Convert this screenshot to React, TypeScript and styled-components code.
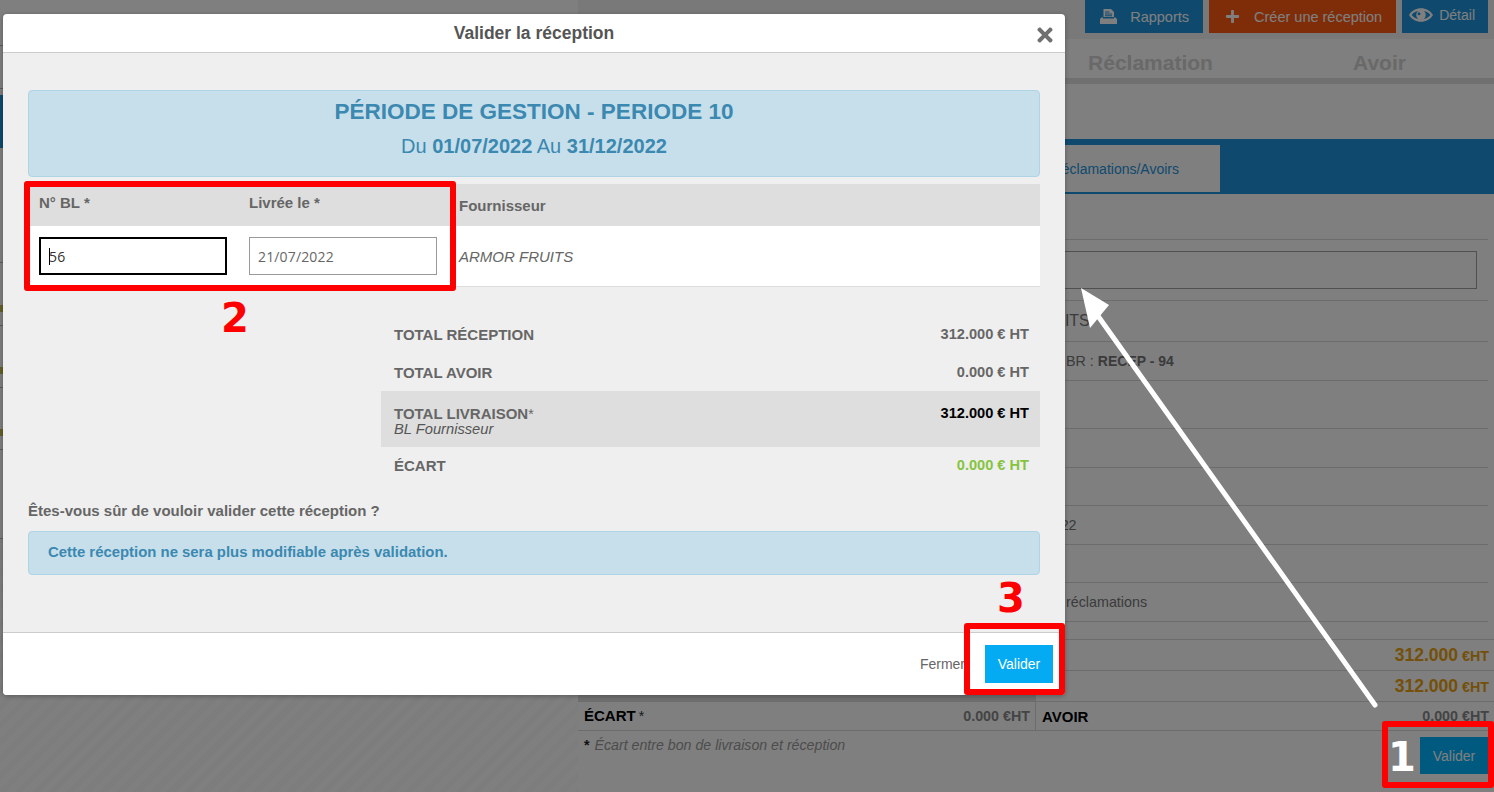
import React from 'react';
import styled, { createGlobalStyle } from 'styled-components';
import { FaPlus, FaTimes } from 'react-icons/fa';

const Global = createGlobalStyle`
  html, body { margin: 0; padding: 0; background: #fefefe; }
  body { font-family: "Liberation Sans", Arial, sans-serif; overflow: hidden; }
  * { box-sizing: border-box; }
`;

const Stage = styled.div`
  position: relative;
  width: 1494px;
  height: 792px;
  overflow: hidden;
`;

/* ---------- page behind the dialog ---------- */
const BackPage = styled.div`
  display: grid;
  grid-template-columns: 578px 916px;
  height: 792px;
  background: #fefefe;
`;

const LeftColumn = styled.div`
  display: flex;
  flex-direction: column;
  background: repeating-linear-gradient(135deg, #fefefe 0 6px, #fafafa 6px 12px);
`;

const LeftRow = styled.div<{ $h: number; $mark?: boolean }>`
  position: relative;
  height: ${p => p.$h}px;
  background: #fefefe;
  border-bottom: 1px solid #b8b8b8;
  flex: none;
  ${p => p.$mark && `
    &::before {
      content: "";
      position: absolute;
      left: 0;
      top: ${Math.round(p.$h * 0.66)}px;
      width: 3px;
      height: 7px;
      background: #c8c050;
    }
  `}
`;

const LeftHeader = styled.div`
  height: 53px;
  margin-top: 6px;
  background: #1e94dc;
  flex: none;
`;

const RightColumn = styled.div`
  display: flex;
  flex-direction: column;
  background: #fefefe;
`;

const TopBar = styled.div`
  height: 39px;
  display: flex;
  justify-content: flex-end;
  align-items: flex-start;
  gap: 6px;
  padding-right: 6px;
  background: #f2f2f2;
`;

const TopButton = styled.div<{ $bg: string; $left: number; $gap: number; $right?: number; $small?: boolean }>`
  height: 33px;
  display: flex;
  align-items: center;
  gap: ${p => p.$gap}px;
  padding: 0 ${p => p.$right ?? 13}px ${p => (p.$small ? 3 : 0)}px ${p => p.$left}px;
  background: ${p => p.$bg};
  color: #fff;
  font-size: ${p => (p.$small ? 14 : 14.5)}px;
  svg { flex: none; }
`;

const TabBar = styled.div`
  height: 45px;
  display: grid;
  grid-template-columns: repeat(4, 229px);
  border-bottom: 6px solid #e0e0e0;
`;

const TabTitle = styled.div`
  display: flex;
  align-items: center;
  justify-content: center;
  padding-top: 8px;
  font-size: 21px;
  font-weight: 700;
  color: #d2d2d2;
`;

const Band = styled.div`
  height: 55px;
  margin-top: 55px;
  padding: 6px 0 2px 432px;
  background: #1e94dc;
  flex: none;
`;

const BandTab = styled.div`
  width: 210px;
  height: 47px;
  display: flex;
  align-items: center;
  justify-content: flex-end;
  padding: 0 41px 0 0;
  background: #fefefe;
  color: #1e94dc;
  font-size: 14px;
`;

const InfoRow = styled.div<{ $h: number; $pad?: number }>`
  height: ${p => p.$h}px;
  margin-right: 6px;
  padding-left: ${p => p.$pad ?? 0}px;
  display: flex;
  align-items: center;
  border-bottom: 1px solid #d8d8d8;
  color: #777;
  font-size: 14.3px;
  flex: none;
`;

const StrongRef = styled.strong`
  margin-left: 4px;
  font-size: 14px;
  color: #777;
`;

const NameText = styled.span`
  font-size: 16px;
`;

const NoteBox = styled.div`
  height: 38px;
  margin-right: 11px;
  border: 1px solid #a0a0a0;
  flex: 1;
`;

const Totals = styled.div`
  margin-top: 17px;
  border-top: 1px solid #d8d8d8;
  flex: none;
`;

const TotalRow = styled.div<{ $h: number }>`
  height: ${p => p.$h}px;
  display: grid;
  grid-template-columns: 458px 458px;
  border-bottom: 1px solid #d8d8d8;
`;

const TotalCell = styled.div<{ $shade?: boolean; $divider?: boolean }>`
  display: flex;
  align-items: center;
  justify-content: space-between;
  padding: 0 5px 0 6px;
  background: ${p => (p.$shade ? '#dedede' : 'transparent')};
  ${p => p.$divider && 'border-right: 1px solid #d8d8d8;'}
`;

const TotalName = styled.span`
  font-size: 15px;
  font-weight: 700;
  color: #000;
`;

const Star = styled.span`
  margin-left: 3px;
  font-size: 14px;
  color: #333;
`;

const Amount = styled.span<{ $big?: boolean }>`
  font-weight: 700;
  font-size: ${p => (p.$big ? 17.5 : 14.3)}px;
  color: ${p => (p.$big ? '#e8a010' : '#888')};
  small { font-size: 14.3px; margin-left: 4px; }
`;

const BackFoot = styled.div`
  display: flex;
  justify-content: space-between;
  align-items: flex-start;
  padding: 6px 6px 0 6px;
`;

const FootNote = styled.div`
  font-size: 14.2px;
  font-style: italic;
  color: #999;
  b { font-style: normal; color: #222; margin-right: 1px; }
`;

const BackValidate = styled.div`
  width: 68px;
  height: 37px;
  display: flex;
  align-items: center;
  justify-content: center;
  background: #00b4ff;
  color: #fff;
  font-size: 14px;
`;

const Scrim = styled.div`
  position: absolute;
  inset: 0;
  background: rgba(0, 0, 0, 0.5);
`;

/* ---------- dialog ---------- */
const Dialog = styled.div`
  position: absolute;
  left: 3px;
  top: 14px;
  width: 1062px;
  height: 681px;
  display: flex;
  flex-direction: column;
  overflow: hidden;
  border-radius: 4px;
  background: #fff;
  box-shadow: 0 1px 5px rgba(0, 0, 0, 0.3);
`;

const DialogHead = styled.div`
  position: relative;
  height: 39px;
  display: flex;
  align-items: center;
  justify-content: center;
  flex: none;
  border-bottom: 1px solid #ccc;
`;

const DialogTitle = styled.h4`
  margin: 0;
  font-size: 17.5px;
  font-weight: 700;
  color: #555;
`;

const CloseButton = styled.span`
  position: absolute;
  right: 9px;
  top: 10px;
  display: flex;
  color: #707070;
`;

const DialogBody = styled.div`
  flex: 1;
  padding: 37px 25px 0;
  background: #efefef;
`;

const PeriodBox = styled.div`
  height: 87px;
  padding-top: 7px;
  text-align: center;
  color: #3b88b0;
  background: #c6dfeb;
  border: 1px solid #aed4e6;
  border-radius: 4px;
`;

const PeriodTitle = styled.div`
  font-size: 22.5px;
  line-height: 28px;
  font-weight: 700;
`;

const PeriodDates = styled.div`
  margin-top: 8px;
  font-size: 20px;
  line-height: 24px;
`;

const DeliveryTable = styled.div`
  margin-top: 7px;
  display: grid;
  grid-template-columns: 210px 210px 1fr;
  grid-template-rows: 42px 61px;
`;

const HeadCell = styled.div<{ $low?: boolean }>`
  padding: ${p => (p.$low ? 14 : 11)}px 11px 0;
  background: #dedede;
  font-size: 15px;
  line-height: 16px;
  font-weight: 700;
  color: #666;
`;

const BodyCell = styled.div`
  position: relative;
  display: flex;
  align-items: flex-start;
  padding: 11px 11px 0;
  background: #fff;
  border-bottom: 1px solid #ddd;
`;

const FieldInput = styled.input<{ $focus?: boolean }>`
  width: 188px;
  height: 38px;
  padding: 0 8px;
  font-family: "Open Sans", sans-serif;
  font-size: 14px;
  letter-spacing: 0.15px;
  color: ${p => (p.$focus ? '#333' : '#666')};
  background: #fff;
  border: ${p => (p.$focus ? '2px solid #000' : '1px solid #999')};
  outline: none;
  border-radius: 0;
`;

const Caret = styled.span`
  position: absolute;
  left: 21px;
  top: 22px;
  width: 1px;
  height: 17px;
  background: #000;
`;

const SupplierName = styled.span`
  padding-top: 11px;
  font-size: 15px;
  font-style: italic;
  color: #666;
`;

const Summary = styled.div`
  margin: 28px 0 0 353px;
  display: flex;
  flex-direction: column;
`;

const SummaryRow = styled.div<{ $h: number; $shade?: boolean; $top?: boolean }>`
  height: ${p => p.$h}px;
  display: flex;
  justify-content: space-between;
  align-items: ${p => (p.$top ? 'flex-start' : 'center')};
  padding: ${p => (p.$top ? '15px 11px 0 13px' : '0 11px 0 13px')};
  background: ${p => (p.$shade ? '#dedede' : 'transparent')};
`;

const SummaryLabel = styled.div`
  font-size: 15px;
  line-height: 15px;
  font-weight: 700;
  color: #666;
  em { display: block; font-weight: 400; font-size: 14.7px; line-height: 16px; color: #555; }
  sup { font-weight: 400; font-size: 14px; line-height: 0; vertical-align: baseline; }
`;

const SummaryValue = styled.div<{ $color: string }>`
  font-size: 14.6px;
  line-height: 15px;
  font-weight: 700;
  color: ${p => p.$color};
`;

const Question = styled.p`
  margin: 20px 0 0;
  font-size: 15px;
  line-height: 16px;
  font-weight: 700;
  color: #666;
`;

const Notice = styled.div`
  margin-top: 12px;
  height: 44px;
  display: flex;
  align-items: center;
  padding: 0 0 3px 19px;
  font-size: 14.9px;
  font-weight: 700;
  color: #3b88b0;
  background: #c6dfeb;
  border: 1px solid #aed4e6;
  border-radius: 4px;
`;

const DialogFoot = styled.div`
  height: 63px;
  flex: none;
  display: flex;
  justify-content: flex-end;
  align-items: flex-start;
  gap: 20px;
  padding: 12px 12px 0 0;
  background: #fff;
  border-top: 1px solid #ccc;
`;

const CloseLink = styled.span`
  height: 38px;
  display: flex;
  align-items: center;
  font-size: 14px;
  color: #666;
`;

const ConfirmButton = styled.div`
  width: 68px;
  height: 38px;
  display: flex;
  align-items: center;
  justify-content: center;
  background: #04aaf2;
  color: #fff;
  font-size: 14px;
`;

/* ---------- annotations drawn on the screenshot ---------- */
const RedFrame = styled.div<{ $x: number; $y: number; $w: number; $h: number }>`
  position: absolute;
  left: ${p => p.$x}px;
  top: ${p => p.$y}px;
  width: ${p => p.$w}px;
  height: ${p => p.$h}px;
  border: 6px solid #fe0000;
  border-radius: 3px;
`;

const StepNumber = styled.div<{ $x: number; $y: number; $color: string }>`
  position: absolute;
  left: ${p => p.$x}px;
  top: ${p => p.$y}px;
  font-family: "DejaVu Sans", sans-serif;
  font-size: 40px;
  line-height: 40px;
  font-weight: 700;
  color: ${p => p.$color};
`;

const ArrowLayer = styled.svg`
  position: absolute;
  inset: 0;
  pointer-events: none;
`;

const PrintIcon = () => (
  <svg width="17" height="15" viewBox="0 0 17 15" fill="currentColor">
    <path
      fillRule="evenodd"
      d="M3.5 0H11l3 3v5H3.5zM5 2.4v1h4.5v-1zM5 4.4v1h7v-1zM5 6.2v1h7v-1z"
    />
    <path d="M1.5 8.6H3v1h11v-1h1.5L17 10v5H0v-5z" />
  </svg>
);

const EyeIcon = () => (
  <svg width="24" height="14" viewBox="0 0 24 14" fill="currentColor">
    <path
      fillRule="evenodd"
      d="M0 7C5-2 19-2 24 7C19 16 5 16 0 7ZM2.6 7C6.5 12.6 17.5 12.6 21.4 7C17.5 1.4 6.500 1.4 2.6 7Z"
    />
    <path
      fillRule="evenodd"
      d="M12 2.2a4.800 4.800 0 1 1 0 9.600a4.800 4.800 0 0 1 0-9.600ZM10 4.200a1.500 1.500 0 1 0 0 3a1.500 1.500 0 0 0 0-3Z"
    />
  </svg>
);

export default function App() {
  return (
    <Stage>
      <Global />
      <BackPage>
        <LeftColumn>
          <LeftRow $h={46} />
          <LeftRow $h={43} />
          <LeftHeader />
          <LeftRow $h={115} />
          <LeftRow $h={63} $mark />
          <LeftRow $h={62} $mark />
          <LeftRow $h={62} $mark />
          <LeftRow $h={89} />
        </LeftColumn>
        <RightColumn>
          <TopBar>
            <TopButton $bg="#1e94dc" $left={15} $gap={13} $right={14}>
              <PrintIcon />
              Rapports
            </TopButton>
            <TopButton $bg="#ff5a10" $left={16} $gap={14} $right={14}>
              <FaPlus size={15} />
              Créer une réception
            </TopButton>
            <TopButton $bg="#1e94dc" $left={7} $gap={6} $small>
              <EyeIcon />
              Détail
            </TopButton>
          </TopBar>
          <TabBar>
            <div />
            <div />
            <TabTitle>Réclamation</TabTitle>
            <TabTitle>Avoir</TabTitle>
          </TabBar>
          <Band>
            <BandTab>Réclamations/Avoirs</BandTab>
          </Band>
          <InfoRow $h={46} />
          <InfoRow $h={61}>
            <NoteBox />
          </InfoRow>
          <InfoRow $h={41} $pad={390}>
            <NameText>ARMOR FRUITS</NameText>
          </InfoRow>
          <InfoRow $h={39} $pad={468}>
            N° BR : <StrongRef>RECEP - 94</StrongRef>
          </InfoRow>
          <InfoRow $h={48} />
          <InfoRow $h={39} />
          <InfoRow $h={38} />
          <InfoRow $h={39} $pad={427}>21/07/2022</InfoRow>
          <InfoRow $h={38} />
          <InfoRow $h={39} $pad={488}>réclamations</InfoRow>
          <Totals>
            <TotalRow $h={31}>
              <TotalCell />
              <TotalCell>
                <span />
                <Amount $big>312.000<small>€HT</small></Amount>
              </TotalCell>
            </TotalRow>
            <TotalRow $h={31}>
              <TotalCell $shade />
              <TotalCell>
                <span />
                <Amount $big>312.000<small>€HT</small></Amount>
              </TotalCell>
            </TotalRow>
            <TotalRow $h={29}>
              <TotalCell $divider>
                <span>
                  <TotalName>ÉCART</TotalName>
                  <Star>*</Star>
                </span>
                <Amount>0.000<small>€HT</small></Amount>
              </TotalCell>
              <TotalCell>
                <TotalName>AVOIR</TotalName>
                <Amount>0.000<small>€HT</small></Amount>
              </TotalCell>
            </TotalRow>
          </Totals>
          <BackFoot>
            <FootNote><b>*</b> Écart entre bon de livraison et réception</FootNote>
            <BackValidate>Valider</BackValidate>
          </BackFoot>
        </RightColumn>
      </BackPage>
      <Scrim />

      <Dialog>
        <DialogHead>
          <DialogTitle>Valider la réception</DialogTitle>
          <CloseButton><FaTimes size={22} /></CloseButton>
        </DialogHead>
        <DialogBody>
          <PeriodBox>
            <PeriodTitle>PÉRIODE DE GESTION - PERIODE 10</PeriodTitle>
            <PeriodDates>Du <b>01/07/2022</b> Au <b>31/12/2022</b></PeriodDates>
          </PeriodBox>
          <DeliveryTable>
            <HeadCell>N° BL *</HeadCell>
            <HeadCell>Livrée le *</HeadCell>
            <HeadCell $low>Fournisseur</HeadCell>
            <BodyCell>
              <FieldInput $focus defaultValue="56" readOnly />
              <Caret />
            </BodyCell>
            <BodyCell>
              <FieldInput defaultValue="21/07/2022" readOnly />
            </BodyCell>
            <BodyCell>
              <SupplierName>ARMOR FRUITS</SupplierName>
            </BodyCell>
          </DeliveryTable>
          <Summary>
            <SummaryRow $h={38}>
              <SummaryLabel>TOTAL RÉCEPTION</SummaryLabel>
              <SummaryValue $color="#666">312.000 € HT</SummaryValue>
            </SummaryRow>
            <SummaryRow $h={38}>
              <SummaryLabel>TOTAL AVOIR</SummaryLabel>
              <SummaryValue $color="#666">0.000 € HT</SummaryValue>
            </SummaryRow>
            <SummaryRow $h={56} $shade $top>
              <SummaryLabel>
                TOTAL LIVRAISON<sup>*</sup>
                <em>BL Fournisseur</em>
              </SummaryLabel>
              <SummaryValue $color="#000">312.000 € HT</SummaryValue>
            </SummaryRow>
            <SummaryRow $h={36}>
              <SummaryLabel>ÉCART</SummaryLabel>
              <SummaryValue $color="#86c440">0.000 € HT</SummaryValue>
            </SummaryRow>
          </Summary>
          <Question>Êtes-vous sûr de vouloir valider cette réception ?</Question>
          <Notice>Cette réception ne sera plus modifiable après validation.</Notice>
        </DialogBody>
        <DialogFoot>
          <CloseLink>Fermer</CloseLink>
          <ConfirmButton>Valider</ConfirmButton>
        </DialogFoot>
      </Dialog>

      <RedFrame $x={24} $y={181} $w={432} $h={110} />
      <RedFrame $x={964} $y={623} $w={101} $h={72} />
      <RedFrame $x={1382} $y={721} $w={112} $h={67} />
      <StepNumber $x={221} $y={298} $color="#fe0000">2</StepNumber>
      <StepNumber $x={997} $y={578} $color="#fe0000">3</StepNumber>
      <StepNumber $x={1388} $y={737} $color="#fff">1</StepNumber>
      <ArrowLayer width="1494" height="792" viewBox="0 0 1494 792">
        <line x1="1375" y1="705" x2="1098" y2="316" stroke="#fff" strokeWidth="5" strokeLinecap="round" />
        <polygon points="1081,288 1109,305 1090,328" fill="#fff" />
      </ArrowLayer>
    </Stage>
  );
}
